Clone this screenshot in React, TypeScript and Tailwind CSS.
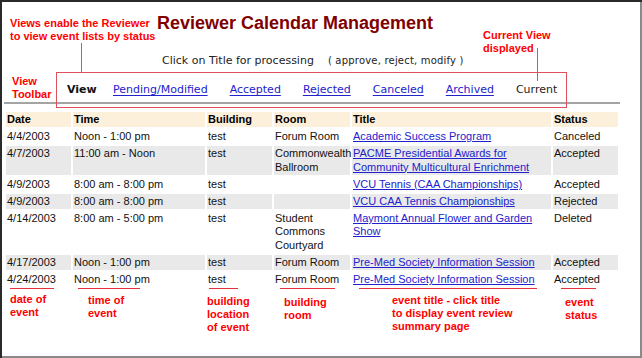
const rows = [
  { date: "4/4/2003", time: "Noon - 1:00 pm", building: "test", room: "Forum Room", title: "Academic Success Program", status: "Canceled" },
  { date: "4/7/2003", time: "11:00 am - Noon", building: "test", room: "Commonwealth Ballroom", title: "PACME Presidential Awards for Community Multicultural Enrichment", status: "Accepted" },
  { date: "4/9/2003", time: "8:00 am - 8:00 pm", building: "test", room: "", title: "VCU Tennis (CAA Championships)", status: "Accepted" },
  { date: "4/9/2003", time: "8:00 am - 8:00 pm", building: "test", room: "", title: "VCU CAA Tennis Championships", status: "Rejected" },
  { date: "4/14/2003", time: "8:00 am - 5:00 pm", building: "test", room: "Student Commons Courtyard", title: "Maymont Annual Flower and Garden Show", status: "Deleted" },
  { date: "4/17/2003", time: "Noon - 1:00 pm", building: "test", room: "Forum Room", title: "Pre-Med Society Information Session", status: "Accepted" },
  { date: "4/24/2003", time: "Noon - 1:00 pm", building: "test", room: "Forum Room", title: "Pre-Med Society Information Session", status: "Accepted" },
];

const views = ["Pending/Modified", "Accepted", "Rejected", "Canceled", "Archived"];

const underlines = [
  { left: 10, width: 44 },
  { left: 78, width: 62 },
  { left: 209, width: 29 },
  { left: 280, width: 55 },
  { left: 359, width: 178 },
  { left: 561, width: 35 },
];

function Note({ left, top, children }: { left: number; top: number; children: React.ReactNode }) {
  return (
    <div
      className="absolute font-['Liberation_Sans',Arial,sans-serif] font-bold text-[11px] leading-[13px] text-[#ff0000] whitespace-nowrap"
      style={{ left, top }}
    >
      {children}
    </div>
  );
}

export default function App() {
  return (
    <div className="relative w-[642px] h-[358px] overflow-hidden bg-white shadow-[inset_2px_2px_0_#2a2a2a,inset_-2px_-2px_0_#8a8a8a]">
      {/* page content */}
      <div className="pt-[13px]">
        <h1 className="ml-[157px] font-['Liberation_Sans',Arial,sans-serif] font-bold text-[18px] leading-[21px] text-[#800000]">
          Reviewer Calendar Management
        </h1>

        <div className="mt-[20px] ml-[162px] h-[13px] font-['DejaVu_Sans',Verdana,sans-serif] text-[11px] leading-[13px] text-[#222] whitespace-nowrap">
          Click on Title for processing
          <span className="ml-[14px] text-[10px] tracking-[0.2px] leading-none">( approve, reject, modify )</span>
        </div>

        {/* view toolbar */}
        <div className="mt-[16px] pl-[67px] flex gap-[22px] font-['DejaVu_Sans',Verdana,sans-serif] text-[11px] leading-[13px] whitespace-nowrap">
          <span className="w-[24px] font-bold text-[#111]">View</span>
          {views.map((v) => (
            <a key={v} className="text-[#2222cc] underline underline-offset-[2px]">
              {v}
            </a>
          ))}
          <span className="text-[#222]">Current</span>
        </div>

        <div className="mt-[6px] ml-[4px] w-[616px] border-t-2 border-[#a4a4a4]" />

        {/* events table */}
        <div className="mt-[8px] ml-[6px] grid grid-cols-[65px_132px_65px_76px_199px_65px] gap-[2px] font-['Liberation_Sans',Arial,sans-serif] text-[11px] leading-[13.2px] text-[#111]">
          {["Date", "Time", "Building", "Room", "Title", "Status"].map((h) => (
            <div key={h} className="bg-[#fdf0da] px-[1px] py-[1px] font-bold text-black">
              {h}
            </div>
          ))}
          {rows.map((r, i) => {
            const bg = i % 2 === 1 ? "bg-[#e9e9e9]" : "bg-white";
            return [
              <div key={i + "d"} className={`${bg} px-[1px] py-[1px]`}>{r.date}</div>,
              <div key={i + "t"} className={`${bg} px-[1px] py-[1px]`}>{r.time}</div>,
              <div key={i + "b"} className={`${bg} px-[1px] py-[1px]`}>{r.building}</div>,
              <div key={i + "r"} className={`${bg} px-[1px] py-[1px]`}>{r.room}</div>,
              <div key={i + "ti"} className={`${bg} px-[1px] py-[1px]`}>
                <a className="text-[#2222cc] underline">{r.title}</a>
              </div>,
              <div key={i + "s"} className={`${bg} px-[1px] py-[1px]`}>{r.status}</div>,
            ];
          })}
        </div>
      </div>

      {/* annotations */}
      <Note left={10} top={17}>
        Views enable the Reviewer
        <br />
        to view event lists by status
      </Note>
      <div className="absolute left-[81px] top-[43px] w-px h-[29px] bg-[#e0505c]" />
      <Note left={12} top={75}>
        View
        <br />
        Toolbar
      </Note>
      <div className="absolute left-[56px] top-[72px] w-[511px] h-[36px] border border-[#e0505c]" />
      <Note left={483} top={29}>
        Current View
        <br />
        displayed
      </Note>
      <div className="absolute left-[537px] top-[48px] w-px h-[33px] bg-[#e0505c]" />

      {underlines.map((u) => (
        <div key={u.left} className="absolute top-[288px] h-px bg-[#e8303c]" style={{ left: u.left, width: u.width }} />
      ))}

      <Note left={10} top={293}>
        date of
        <br />
        event
      </Note>
      <Note left={88} top={294}>
        time of
        <br />
        event
      </Note>
      <Note left={207} top={295}>
        building
        <br />
        location
        <br />
        of event
      </Note>
      <Note left={284} top={296}>
        building
        <br />
        room
      </Note>
      <Note left={392} top={294}>
        event title - click title
        <br />
        to display event review
        <br />
        summary page
      </Note>
      <Note left={565} top={296}>
        event
        <br />
        status
      </Note>
    </div>
  );
}
